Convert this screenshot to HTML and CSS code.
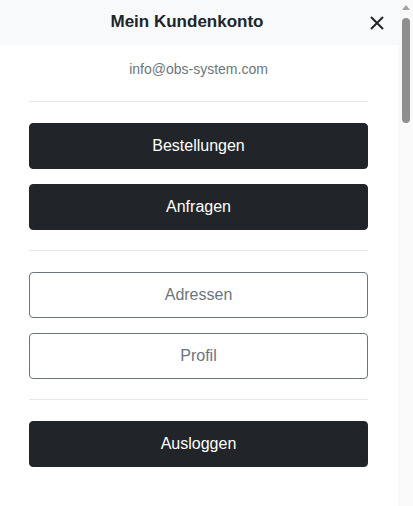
FILE: index.html
```html
<!DOCTYPE html>
<html lang="de">
<head>
  <meta charset="UTF-8" />
  <title>Mein Kundenkonto</title>
  <link rel="stylesheet" href="styles.css">
</head>
<body>
  <div id="account-panel">
    <div class="panel-header">
      <h5 class="panel-title">Mein Kundenkonto</h5>
      <button class="btn-close" aria-label="Schließen">
        <svg viewBox="0 0 16 16" width="16" height="16">
          <path d="M2 2 L14 14 M14 2 L2 14" stroke="#212529" stroke-width="2" fill="none" />
        </svg>
      </button>
    </div>

    <div class="panel-body">
      <div class="user-mail">info@obs-system.com</div>
      <hr>
      <a class="btn btn-dark" href="#">Bestellungen</a>
      <a class="btn btn-dark" href="#">Anfragen</a>
      <hr>
      <a class="btn btn-outline" href="#">Adressen</a>
      <a class="btn btn-outline" href="#">Profil</a>
      <hr>
      <a class="btn btn-dark" href="#">Ausloggen</a>
    </div>
  </div>

  <div class="scrollbar">
    <div class="scroll-arrow"></div>
    <div class="scroll-thumb"></div>
  </div>
</body>
</html>
```

FILE: styles.css
```css
* {
  box-sizing: border-box;
}

body {
  margin: 0;
  display: flex;
  height: 100vh;
  overflow: hidden;
  font-family: "Liberation Sans", Arial, sans-serif;
  color: #212529;
  background: #fff;
}

#account-panel {
  flex: 1;
  min-width: 0;
}

.panel-header {
  display: flex;
  align-items: center;
  height: 45px;
  padding: 0 9px;
  background: #f8f9fa;
}

.panel-title {
  flex: 1;
  margin: 0;
  text-align: center;
  font-size: 17px;
  font-weight: bold;
  line-height: 1.2;
}

.btn-close {
  width: 24px;
  height: 24px;
  padding: 4px;
  border: none;
  background: transparent;
  cursor: pointer;
  display: flex;
  align-items: center;
  justify-content: center;
}

.panel-body {
  padding: 14px 30px 20px 29px;
}

.user-mail {
  text-align: center;
  font-size: 14px;
  color: #6c757d;
  line-height: 20px;
}

hr {
  border: none;
  border-top: 1px solid #e5e7e9;
  margin: 22px 0 21px;
}

.btn {
  display: block;
  height: 46px;
  line-height: 44px;
  margin-bottom: 15px;
  border: 1px solid transparent;
  border-radius: 4px;
  text-align: center;
  text-decoration: none;
  font-size: 16px;
}

.btn-dark {
  background: #212529;
  border-color: #212529;
  color: #fff;
}

.btn-outline {
  background: #fff;
  border-color: #6c757d;
  color: #6c757d;
}

.btn + hr {
  margin-top: 20px;
}

/* page scrollbar as it shows in the screenshot */
.scrollbar {
  width: 15px;
  flex-shrink: 0;
  background: #f9f9f9;
  display: flex;
  flex-direction: column;
  align-items: center;
}

.scroll-arrow {
  margin-top: 5px;
  width: 0;
  height: 0;
  border-left: 4px solid transparent;
  border-right: 4px solid transparent;
  border-bottom: 5px solid #a3a3a3;
}

.scroll-thumb {
  margin-top: 8px;
  width: 8px;
  height: 105px;
  border-radius: 4px;
  background: #8f8f8f;
}
```
